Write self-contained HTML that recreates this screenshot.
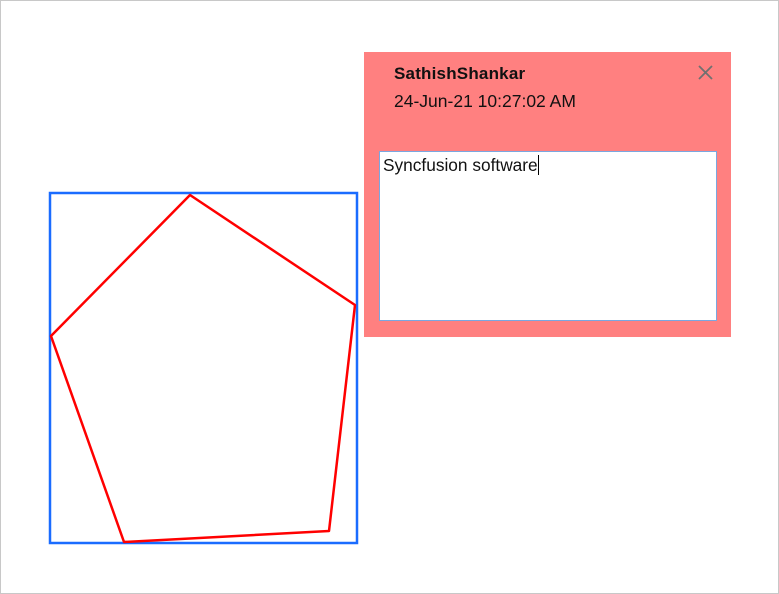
<html><head><style>
body{margin:0;width:779px;height:594px;background:#fff;position:relative;overflow:hidden;font-family:"Segoe UI","Liberation Sans","DejaVu Sans",sans-serif}
.frame{position:absolute;left:0;top:0;width:777px;height:592px;border:1px solid #c8c8c8}
.note{position:absolute;left:364px;top:52px;width:367px;height:285px;background:#ff8080}
.name{position:absolute;left:30px;top:12px;font-weight:bold;font-size:17px;color:#111;letter-spacing:0.2px}
.date{position:absolute;left:30px;top:39px;font-size:17.5px;color:#111}
.ta{position:absolute;left:15px;top:99px;width:336px;height:168px;background:#fff;border:1px solid #7aa7e0}
.ta span{position:absolute;left:3px;top:3px;font-size:17.3px;color:#111}
.caret{display:inline-block;width:1.5px;height:20px;background:#000;vertical-align:-4px}
</style></head><body>
<div class="frame"></div>
<div class="note">
<div class="name">SathishShankar</div>
<div class="date">24-Jun-21 10:27:02 AM</div>
<div class="ta"><span>Syncfusion software<i class="caret"></i></span></div>
</div>
<svg width="779" height="594" style="position:absolute;left:0;top:0">
<rect x="50" y="193" width="307" height="350" fill="none" stroke="#1a6cff" stroke-width="2.5"/>
<polygon points="190,195 355,305 329,531 124,542 51,336" fill="none" stroke="#ff0000" stroke-width="2.5" stroke-linejoin="round"/>
<path d="M699 66 L712 79 M712 66 L699 79" stroke="#707070" stroke-width="1.8"/>
</svg>
</body></html>
